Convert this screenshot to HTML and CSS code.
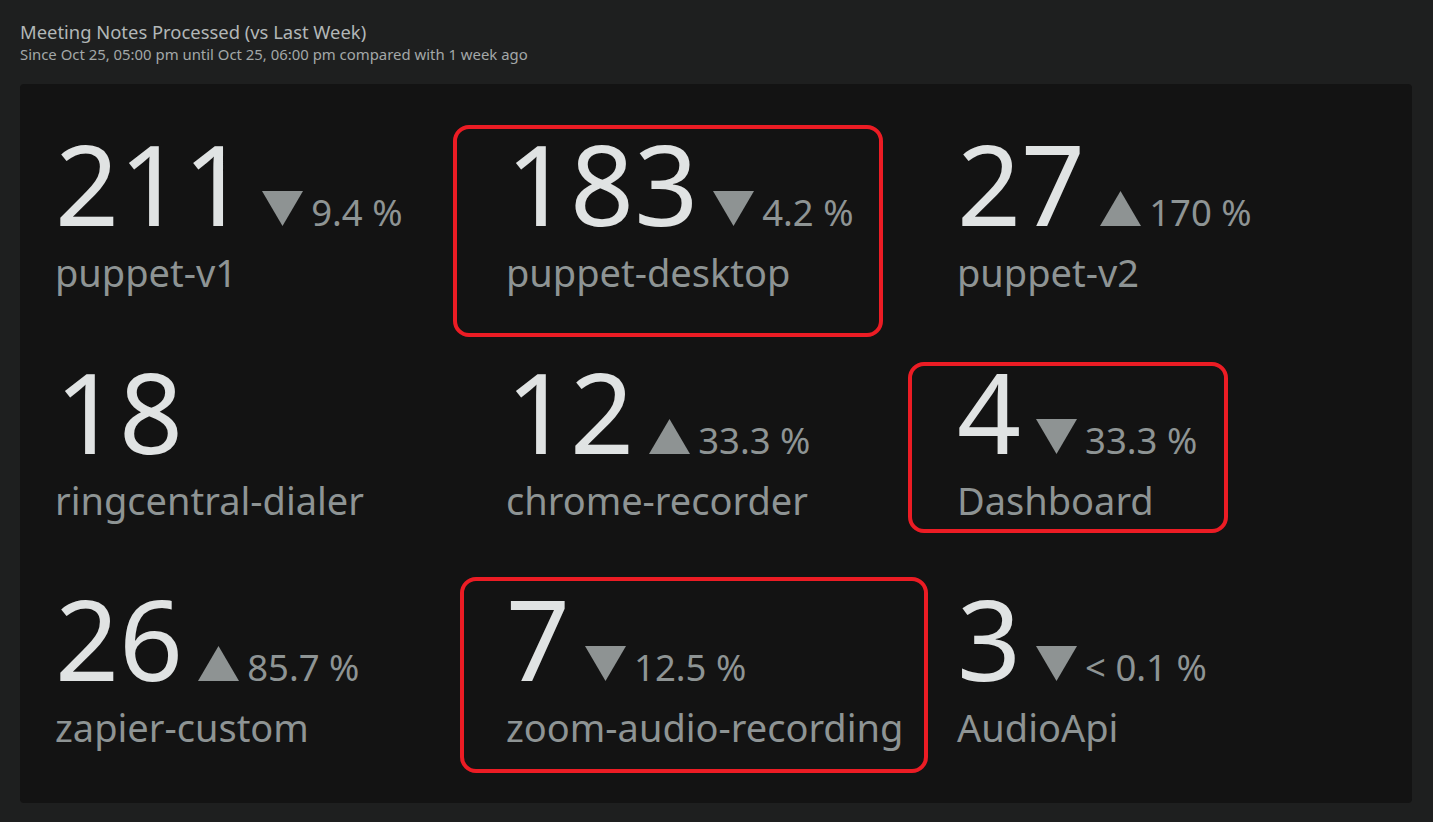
FILE: index.html
```html
<!DOCTYPE html>
<html lang="en">
<head>
<meta charset="utf-8">
<title>Meeting Notes Processed</title>
<link rel="stylesheet" href="styles.css">
</head>
<body>
<header class="head">
  <div class="title">Meeting Notes Processed (vs Last Week)</div>
  <div class="subtitle">Since Oct 25, 05:00 pm until Oct 25, 06:00 pm compared with 1 week ago</div>
</header>
<main class="panel">
  <div class="grid">
    <div class="stat">
      <div class="line"><span class="num">211</span><svg class="tri" viewBox="0 0 41 35"><polygon points="0,0 41,0 20.5,35"/></svg><span class="pct">9.4 %</span></div>
      <div class="name">puppet-v1</div>
    </div>
    <div class="stat">
      <div class="line"><span class="num">183</span><svg class="tri" viewBox="0 0 41 35"><polygon points="0,0 41,0 20.5,35"/></svg><span class="pct">4.2 %</span></div>
      <div class="name">puppet-desktop</div>
    </div>
    <div class="stat">
      <div class="line"><span class="num">27</span><svg class="tri" viewBox="0 0 41 35"><polygon points="20.5,0 41,35 0,35"/></svg><span class="pct">170 %</span></div>
      <div class="name">puppet-v2</div>
    </div>
    <div class="stat">
      <div class="line"><span class="num">18</span></div>
      <div class="name">ringcentral-dialer</div>
    </div>
    <div class="stat">
      <div class="line"><span class="num">12</span><svg class="tri" viewBox="0 0 41 35"><polygon points="20.5,0 41,35 0,35"/></svg><span class="pct">33.3 %</span></div>
      <div class="name">chrome-recorder</div>
    </div>
    <div class="stat">
      <div class="line"><span class="num">4</span><svg class="tri" viewBox="0 0 41 35"><polygon points="0,0 41,0 20.5,35"/></svg><span class="pct">33.3 %</span></div>
      <div class="name">Dashboard</div>
    </div>
    <div class="stat">
      <div class="line"><span class="num">26</span><svg class="tri" viewBox="0 0 41 35"><polygon points="20.5,0 41,35 0,35"/></svg><span class="pct">85.7 %</span></div>
      <div class="name">zapier-custom</div>
    </div>
    <div class="stat">
      <div class="line"><span class="num">7</span><svg class="tri" viewBox="0 0 41 35"><polygon points="0,0 41,0 20.5,35"/></svg><span class="pct">12.5 %</span></div>
      <div class="name">zoom-audio-recording</div>
    </div>
    <div class="stat">
      <div class="line"><span class="num">3</span><svg class="tri" viewBox="0 0 41 35"><polygon points="0,0 41,0 20.5,35"/></svg><span class="pct">&lt; 0.1 %</span></div>
      <div class="name">AudioApi</div>
    </div>
  </div>
</main>
<div class="mark mark-1"></div>
<div class="mark mark-2"></div>
<div class="mark mark-3"></div>
</body>
</html>
```
FILE: styles.css
```css
html, body {
  margin: 0;
  padding: 0;
}
body {
  position: relative;
  width: 1433px;
  height: 822px;
  overflow: hidden;
  background: #1e1f1f;
  font-family: "Noto Sans", "Open Sans", sans-serif;
}
.head {
  padding: 21px 0 0 20px;
}
.title {
  font-size: 18.4px;
  line-height: 22px;
  color: #b2b7b7;
}
.subtitle {
  margin-top: 3px;
  font-size: 14.9px;
  line-height: 16px;
  color: #a3a8a8;
}
.panel {
  box-sizing: border-box;
  height: 719px;
  margin: 22px 21px 0 20px;
  background: #131313;
  border-radius: 4px;
  padding: 43px 0 0 35px;
}
.grid {
  display: grid;
  grid-template-columns: repeat(3, 451px);
  row-gap: 60.5px;
}
.stat {
  display: flex;
  flex-direction: column;
}
.line {
  font-size: 112px;
  line-height: 112px;
  height: 112px;
  white-space: nowrap;
  color: #e0e3e3;
}
.tri {
  width: 41px;
  height: 35px;
  margin-left: 15px;
  margin-right: 8px;
  vertical-align: baseline;
  fill: #8e9393;
}
.pct {
  font-size: 36.5px;
  color: #8e9494;
}
.name {
  margin-top: 11px;
  font-size: 38px;
  line-height: 44px;
  color: #8e9494;
  white-space: nowrap;
}
.mark {
  position: absolute;
  box-sizing: border-box;
  border: 4px solid #ec1c24;
  border-radius: 16px;
}
.mark-1 { left: 453px; top: 125px; width: 430px; height: 212px; }
.mark-2 { left: 908px; top: 362px; width: 320px; height: 171px; }
.mark-3 { left: 460px; top: 577px; width: 468px; height: 196px; }
```
